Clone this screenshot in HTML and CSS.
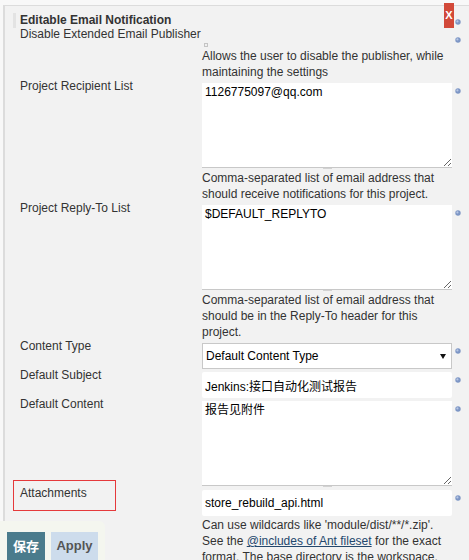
FILE: index.html
```html
<!DOCTYPE html>
<html lang="zh-CN">
<head>
  <meta charset="UTF-8">
  <meta name="viewport" content="width=device-width, initial-scale=1.0">
  <title>Editable Email Notification</title>
  <link rel="stylesheet" href="styles.css">
</head>
<body>
  <div class="panel">
    <button class="delete" type="button">X</button>
    <div class="section-head">
      <span>Editable Email Notification</span>
      <svg class="help-icon" viewBox="0 0 6 6"><circle cx="3" cy="3" r="2.7" fill="#7d96c5"/><circle cx="2.4" cy="2.4" r="1.1" fill="#b8c8e5"/></svg>
    </div>

    <div class="form">
      <!-- disable publisher -->
      <div class="label first">Disable Extended Email Publisher</div>
      <div><span class="checkbox"></span></div>
      <svg class="help-icon first" viewBox="0 0 6 6"><circle cx="3" cy="3" r="2.7" fill="#7d96c5"/><circle cx="2.4" cy="2.4" r="1.1" fill="#b8c8e5"/></svg>

      <div></div>
      <div class="help">Allows the user to disable the publisher, while maintaining the settings</div>
      <div></div>

      <!-- recipients -->
      <div class="label">Project Recipient List</div>
      <div class="control">
        <textarea>1126775097@qq.com</textarea>
        <div class="handle"><span></span></div>
      </div>
      <svg class="help-icon" viewBox="0 0 6 6"><circle cx="3" cy="3" r="2.7" fill="#7d96c5"/><circle cx="2.4" cy="2.4" r="1.1" fill="#b8c8e5"/></svg>

      <div></div>
      <div class="help">Comma-separated list of email address that should receive notifications for this project.</div>
      <div></div>

      <!-- reply-to -->
      <div class="label">Project Reply-To List</div>
      <div class="control">
        <textarea>$DEFAULT_REPLYTO</textarea>
        <div class="handle"><span></span></div>
      </div>
      <svg class="help-icon" viewBox="0 0 6 6"><circle cx="3" cy="3" r="2.7" fill="#7d96c5"/><circle cx="2.4" cy="2.4" r="1.1" fill="#b8c8e5"/></svg>

      <div></div>
      <div class="help">Comma-separated list of email address that should be in the Reply-To header for this project.</div>
      <div></div>

      <!-- content type -->
      <div class="label">Content Type</div>
      <div class="control">
        <div class="select"><span>Default Content Type</span><span class="arrow"></span></div>
      </div>
      <svg class="help-icon" viewBox="0 0 6 6"><circle cx="3" cy="3" r="2.7" fill="#7d96c5"/><circle cx="2.4" cy="2.4" r="1.1" fill="#b8c8e5"/></svg>

      <!-- subject -->
      <div class="label">Default Subject</div>
      <div class="control">
        <input type="text" value="Jenkins:接口自动化测试报告">
      </div>
      <svg class="help-icon" viewBox="0 0 6 6"><circle cx="3" cy="3" r="2.7" fill="#7d96c5"/><circle cx="2.4" cy="2.4" r="1.1" fill="#b8c8e5"/></svg>

      <!-- content -->
      <div class="label">Default Content</div>
      <div class="control">
        <textarea>报告见附件</textarea>
        <div class="handle"><span></span></div>
      </div>
      <svg class="help-icon" viewBox="0 0 6 6"><circle cx="3" cy="3" r="2.7" fill="#7d96c5"/><circle cx="2.4" cy="2.4" r="1.1" fill="#b8c8e5"/></svg>

      <!-- attachments -->
      <div class="label marked">Attachments</div>
      <div class="control">
        <input type="text" value="store_rebuild_api.html">
      </div>
      <svg class="help-icon" viewBox="0 0 6 6"><circle cx="3" cy="3" r="2.7" fill="#7d96c5"/><circle cx="2.4" cy="2.4" r="1.1" fill="#b8c8e5"/></svg>

      <div></div>
      <div class="help">Can use wildcards like 'module/dist/**/*.zip'. See the <a href="#">@includes of Ant fileset</a> for the exact format. The base directory is the workspace. You can only archive files that are located in your workspace.</div>
      <div></div>
    </div>
  </div>

  <div class="bottom-bar">
    <button class="btn btn-save" type="button">保存</button>
    <button class="btn btn-apply" type="button">Apply</button>
  </div>
</body>
</html>
```

FILE: styles.css
```css
body {
  margin: 0;
  background: #f8f8f8;
  color: #333;
  font: 12px/16px "Liberation Sans", Arial, "Noto Sans CJK SC", sans-serif;
}
.panel {
  position: relative;
  margin: 5px 0 0 3px;
  padding-bottom: 60px;
  border-top: 1px solid #dcdcdc;
  border-left: 2px solid #dcdcdc;
  background: #f2f2f2;
}
.delete {
  position: absolute;
  top: -3px;
  right: 15px;
  width: 10px;
  height: 25px;
  padding: 0;
  border: none;
  background: #d24939;
  color: white;
  font: bold 11px/25px "Liberation Sans", Arial, sans-serif;
  text-align: center;
}
.section-head {
  display: flex;
  justify-content: space-between;
  align-items: flex-start;
  margin: 7px 0 0 8px;
  padding-left: 4px;
  border-left: 3px solid #e3e3e3;
  font-weight: bold;
  line-height: 15px;
}
.section-head .help-icon {
  margin: 6px 8px 0 0;
}
.form {
  display: grid;
  grid-template-columns: 182px 250px 1fr;
  align-items: start;
  margin: -2px 0 0 15px;
}
.label {
  margin-top: -2px;
  white-space: nowrap;
}
.label.first {
  margin-top: 0;
}
.label.marked {
  position: relative;
}
.label.marked::after {
  content: "";
  position: absolute;
  left: -7px;
  top: -5px;
  width: 103px;
  height: 31px;
  box-sizing: border-box;
  border: 1px solid #e5393b;
}
.checkbox {
  display: block;
  width: 4px;
  height: 4px;
  margin: 17px 0 0 2px;
  box-sizing: border-box;
  border: 1px solid #c4c4c4;
  background: #f0f0f0;
}
.help-icon {
  display: block;
  width: 6px;
  height: 6px;
  margin: 8px 0 0 3px;
}
.help-icon.first {
  margin-top: 11px;
}
.help {
  margin-top: 1px;
}
.help a {
  color: #24476c;
}
.control {
  margin-top: 3px;
}
textarea {
  display: block;
  width: 250px;
  height: 84px;
  margin: 0;
  padding: 1px 3px;
  box-sizing: border-box;
  border: none;
  outline: none;
  background: white;
  color: #000;
  font: inherit;
  resize: vertical;
}
.handle {
  display: flex;
  justify-content: center;
  height: 1px;
  border-top: 1px solid #c8c8c8;
}
.handle span {
  width: 9px;
  height: 1px;
  background: #d2d2d2;
}
input {
  display: block;
  width: 250px;
  height: 26px;
  margin: 0;
  padding: 0 3px;
  box-sizing: border-box;
  border: none;
  border-radius: 2px;
  outline: none;
  background: white;
  color: #000;
  font: inherit;
}
.select {
  display: flex;
  justify-content: space-between;
  align-items: center;
  height: 26px;
  padding: 0 5px 0 3px;
  box-sizing: border-box;
  border: 1px solid #c8c8c8;
  background: white;
  color: #000;
}
.arrow {
  border-left: 3px solid transparent;
  border-right: 3px solid transparent;
  border-top: 5px solid #111;
}
.bottom-bar {
  position: fixed;
  left: 0;
  bottom: 0;
  width: 105px;
  height: 39px;
  box-sizing: border-box;
  padding: 11px 0 0 7px;
  display: flex;
  align-items: flex-start;
  gap: 6px;
  background: #f4f6ef;
  border-top-right-radius: 6px;
}
.btn {
  height: 30px;
  padding: 0 0 3px;
  border: none;
  font: bold 13px "Liberation Sans", Arial, "Noto Sans CJK SC", sans-serif;
}
.btn-save {
  width: 38px;
  background: #4a7b8c;
  color: white;
}
.btn-apply {
  width: 47px;
  background: #cddcec;
  color: #555;
}
```
